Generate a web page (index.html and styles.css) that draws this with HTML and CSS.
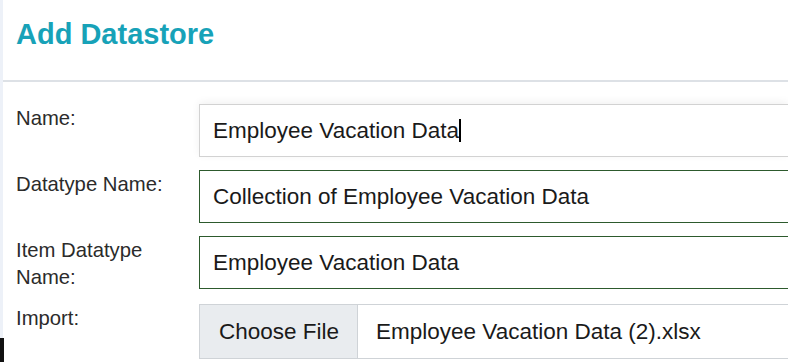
FILE: index.html
```html
<!DOCTYPE html>
<html lang="en">
<head>
    <meta charset="UTF-8">
    <meta name="viewport" content="width=device-width, initial-scale=1.0">
    <title>Add Datastore</title>
    <link rel="stylesheet" href="styles.css">
</head>
<body>
    <div class="modal">
        <div class="modal-header">
            <h1>Add Datastore</h1>
        </div>
        <div class="modal-body">
            <div class="form-grid">
                <label class="label">Name:</label>
                <div class="field">Employee Vacation Data<span class="caret"></span></div>

                <label class="label">Datatype Name:</label>
                <div class="field valid">Collection of Employee Vacation Data</div>

                <label class="label">Item Datatype<br>Name:</label>
                <div class="field valid">Employee Vacation Data</div>

                <label class="label">Import:</label>
                <div class="field file-field">
                    <span class="file-btn">Choose File</span>
                    <span class="file-name">Employee Vacation Data (2).xlsx</span>
                </div>
            </div>
        </div>
    </div>
    <div class="edge-mark"></div>
</body>
</html>
```

FILE: styles.css
```css
html, body {
    margin: 0;
    height: 100%;
}
body {
    font-family: "Liberation Sans", Arial, sans-serif;
    background-color: #fff;
    overflow: hidden;
    position: relative;
}
.modal {
    height: 100%;
    border-left: 3px solid #edf1f8;
}
.modal-header {
    padding: 17px 13px 28px;
    border-bottom: 2px solid #dde1e6;
}
.modal-header h1 {
    margin: 0;
    font-size: 29px;
    line-height: 35px;
    font-weight: bold;
    color: #17a2b8;
}
.modal-body {
    padding: 22px 0 0 13px;
}
.form-grid {
    display: grid;
    grid-template-columns: 183px 1fr;
    row-gap: 13px;
    align-items: start;
}
.label {
    padding-top: 1px;
    font-size: 20.3px;
    line-height: 27px;
    color: #2b2b2b;
}
.field {
    box-sizing: border-box;
    height: 53px;
    padding: 0 13px;
    font-size: 22.5px;
    line-height: 51px;
    color: #1a1a1a;
    background: #fff;
    border: 1px solid #d2d2d2;
    border-right-width: 0;
    box-shadow: 0 -2px 8px rgba(0, 0, 0, 0.06);
    white-space: nowrap;
    overflow: hidden;
}
.field.valid {
    border-color: #2d5a2d;
    box-shadow: none;
}
.caret {
    display: inline-block;
    width: 2px;
    height: 23px;
    background: #000;
    vertical-align: -4px;
}
.file-field {
    display: flex;
    height: 55px;
    padding: 0;
    box-shadow: none;
    border-color: #cfd3d7;
}
.file-btn {
    width: 158px;
    flex-shrink: 0;
    box-sizing: border-box;
    padding-left: 19px;
    background-color: #e9ecef;
    border-right: 1px solid #cfd3d7;
    line-height: 53px;
}
.file-name {
    padding-left: 18px;
    line-height: 53px;
}
.edge-mark {
    position: absolute;
    left: 0;
    bottom: 0;
    width: 4px;
    height: 24px;
    background: #111;
}
```
